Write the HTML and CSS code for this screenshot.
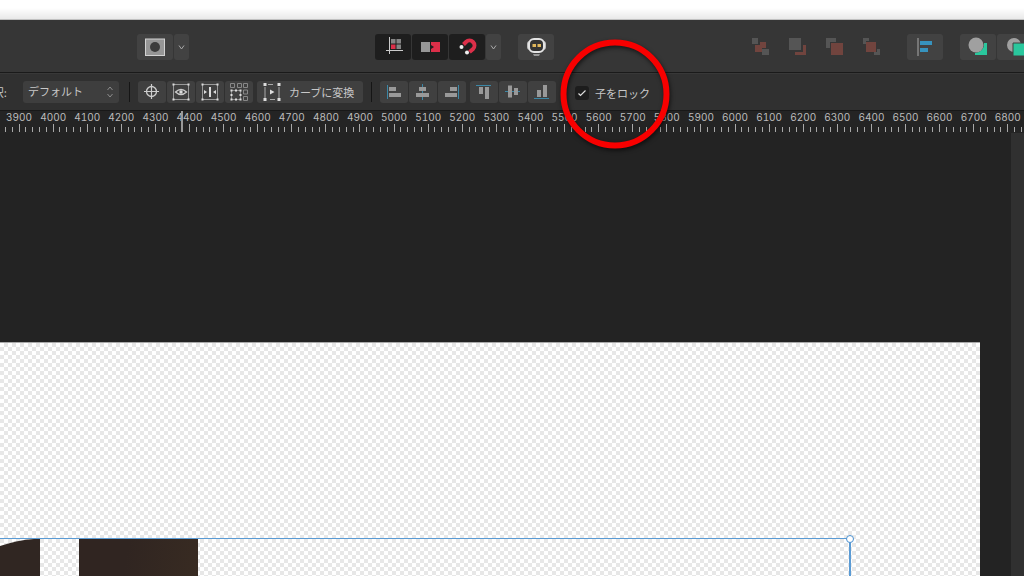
FILE: index.html
```html
<!DOCTYPE html>
<html lang="ja">
<head>
<meta charset="utf-8">
<meta name="viewport" content="width=device-width, initial-scale=1">
<title>子をロック</title>
<link rel="stylesheet" href="styles.css">
</head>
<body>
<div class="app">
  <header class="toolbar">
    <div class="group mask-group">
      <button class="btn" aria-label="マスク"><svg width="36" height="26" viewBox="0 0 36 26"><rect x="8.500" y="5" width="19" height="16.500" fill="#969696" stroke="#d2d2d2"/><circle cx="18" cy="13" r="5" fill="#3c3c3c"/></svg></button>
      <button class="btn btn-slim" aria-label="マスクのオプション"><svg width="15" height="26" viewBox="0 0 15 26"><path d="M5 11.500 7.500 15 10 11.500" fill="none" stroke="#aaa"/></svg></button>
    </div>
    <div class="group snap-group">
      <button class="btn btn-on" aria-label="ピクセル整合"><svg width="36" height="26" viewBox="0 0 36 26"><path d="M16 5h4.500v4.500H16zM21.500 5H26v4.500h-4.500zM21.500 10.500H26V15h-4.500z" fill="#858585"/><path d="M16 10.500h4.500V15H16z" fill="#dc2f49"/><path d="M14.500 3v17M11 16.500h17" stroke="#ccc" fill="none"/></svg></button>
      <button class="btn btn-on" aria-label="移動を整数に"><svg width="36" height="26" viewBox="0 0 36 26"><path d="M9 8h9v10H9z" fill="#969696"/><path d="M19 8h9v10h-9v-3l3-2-3-2z" fill="#dc2f49"/></svg></button>
      <button class="btn btn-on" aria-label="スナップ"><svg width="36" height="26" viewBox="0 0 36 26"><path d="m14.500 10.500 2.500-2.500a4.900 4.900 0 0 1 7 7l-3.500 3" fill="none" stroke="#dc2f49" stroke-width="4"/><circle cx="12.500" cy="13" r="2" fill="#eee"/><circle cx="18" cy="18.500" r="2" fill="#eee"/></svg></button>
      <button class="btn btn-slim" aria-label="スナップのオプション"><svg width="15" height="26" viewBox="0 0 15 26"><path d="M5 11.500 7.500 15 10 11.500" fill="none" stroke="#aaa"/></svg></button>
    </div>
    <div class="group assistant-group">
      <button class="btn" aria-label="アシスタント"><svg width="36" height="26" viewBox="0 0 36 26"><rect x="9" y="7" width="19" height="9" rx="3" fill="#bbb"/><rect x="11" y="5" width="15" height="13" rx="5" fill="#333" stroke="#e4e4e4" stroke-width="2"/><path d="M14.500 10H18v3h-3.500zM19.500 10H23v3h-3.500z" fill="#dfb65b"/><path d="M15 20h7l-1 2h-5z" fill="#999"/></svg></button>
    </div>
    <div class="group order-group">
      <button class="btn btn-flat" disabled aria-label="最背面へ移動"><svg width="36" height="26" viewBox="0 0 36 26"><path d="M14 11h5V8h6v6h-4v4h-7z" fill="#71443e"/><path d="M11 4h6v6h-6zM21 15h7v6h-7z" fill="#555"/></svg></button>
      <button class="btn btn-flat" disabled aria-label="背面へ移動"><svg width="36" height="26" viewBox="0 0 36 26"><path d="M11 4h12v12H11z" fill="#555"/><path d="M25 11h3v10H17v-3h8z" fill="#71443e"/></svg></button>
      <button class="btn btn-flat" disabled aria-label="前面へ移動"><svg width="36" height="26" viewBox="0 0 36 26"><path d="M11 4h10v4h-6v6h-4z" fill="#555"/><path d="M16 9h12v12H16z" fill="#71443e"/></svg></button>
      <button class="btn btn-flat" disabled aria-label="最前面へ移動"><svg width="36" height="26" viewBox="0 0 36 26"><path d="M11 4h6v3h-3v3h-3zM25 15h3v6h-6v-3h3z" fill="#555"/><path d="M14 8h10v10H14z" fill="#71443e"/></svg></button>
    </div>
    <div class="group align-group">
      <button class="btn" aria-label="整列"><svg width="36" height="26" viewBox="0 0 36 26"><path d="M11 4v18" stroke="#888" stroke-width="1.500"/><path d="M13 7h12v4H13zM13 14h8v4h-8z" fill="#3793be"/></svg></button>
    </div>
    <div class="group boolean-group">
      <button class="btn" aria-label="追加"><svg width="36" height="26" viewBox="0 0 36 26"><path d="M15 21h12V9h-3a9 9 0 0 1-9 10z" fill="#2ac79d"/><circle cx="16" cy="11" r="7.500" fill="#a0a0a0"/></svg></button>
      <button class="btn btn-edge" aria-label="型抜き"><svg width="27" height="26" viewBox="0 0 27 26"><circle cx="17" cy="11" r="7" fill="#a0a0a0"/><path d="M16 9h12v13H16z" fill="#2ac79d" stroke="#404040"/></svg></button>
    </div>
  </header>

  <div class="context">
    <label class="context-label" for="preset">択:</label>
    <div class="picker">
      <select id="preset"><option>デフォルト</option></select>
      <svg class="picker-arrows" width="8" height="14" viewBox="0 0 8 14"><path d="M1.500 5 4 2l2.500 3M1.500 9 4 12l2.500-3" fill="none" stroke="#8c8c8c"/></svg>
    </div>
    <i class="divider"></i>
    <div class="tools">
      <button class="tool" aria-label="回転中心"><svg width="28" height="22" viewBox="0 0 28 22"><circle cx="13.500" cy="10.500" r="5" fill="none" stroke="#ccc" stroke-width="1.300"/><path d="M13.500 3v15M6 10.500h15" stroke="#ccc" stroke-width="1.200"/></svg></button>
      <button class="tool" aria-label="選択を隠す"><svg width="28" height="22" viewBox="0 0 28 22"><path d="M6.500 3.500h15v15h-15z" fill="none" stroke="#999"/><path d="M5.500 2.500h2v2h-2zM20.500 2.500h2v2h-2zM5.500 17.500h2v2h-2zM20.500 17.500h2v2h-2z" fill="#ddd"/><path d="M8.500 11q5.500-5 11 0-5.500 5-11 0z" fill="none" stroke="#ccc" stroke-width="1.300"/><circle cx="14" cy="11" r="1.700" fill="#ddd"/></svg></button>
      <button class="tool" aria-label="変換の原点"><svg width="28" height="22" viewBox="0 0 28 22"><path d="M6.500 3.500h15v15h-15z" fill="none" stroke="#999"/><path d="M5.500 2.500h2v2h-2zM20.500 2.500h2v2h-2zM5.500 17.500h2v2h-2zM20.500 17.500h2v2h-2zM13 6h2v10h-2zM8 9l3 2-3 2zM20 9l-3 2 3 2z" fill="#ddd"/></svg></button>
      <button class="tool" aria-label="個別に変形"><svg width="28" height="22" viewBox="0 0 28 22"><path d="M5.500 2.500h4v4h-4zM12.500 2.500h4v4h-4zM18.500 2.500h4v4h-4zM18.500 9h4v4h-4zM18.500 15.500h4v4h-4z" fill="none" stroke="#888"/><path d="M6.500 9.500h9v9h-9z" fill="none" stroke="#888"/><path d="M5.500 8.500h2v2h-2zM14.500 8.500h2v2h-2zM5.500 17.500h2v2h-2zM14.500 17.500h2v2h-2zM10 8.500h2v2h-2zM10 17.500h2v2h-2zM5.500 13h2v2h-2zM14.500 13h2v2h-2z" fill="#ddd"/></svg></button>
    </div>
    <button class="tool convert"><svg width="28" height="22" viewBox="0 0 28 22"><path d="M7 6v11M21 6v11M10 3.500h5M12 18.500h5" fill="none" stroke="#aaa"/><path d="M5.500 2h3v3h-3zM19.500 2h3v3h-3zM5.500 17h3v3h-3zM19.500 17h3v3h-3zM12 8.500l4.500 2.500-4.500 2.500z" fill="#ddd"/></svg><span>カーブに変換</span></button>
    <i class="divider"></i>
    <div class="tools align-tools">
      <button class="tool" aria-label="左揃え"><svg width="28" height="22" viewBox="0 0 28 22"><path d="M9 6h7v4H9zM9 12h12v4H9z" fill="#999"/><path d="M7.500 4v14" stroke="#3b87a6"/></svg></button>
      <button class="tool" aria-label="左右中央揃え"><svg width="28" height="22" viewBox="0 0 28 22"><path d="M13.500 3v16" stroke="#3b87a6"/><path d="M10 6h7v4h-7zM7 12h13v4H7z" fill="#999"/></svg></button>
      <button class="tool" aria-label="右揃え"><svg width="28" height="22" viewBox="0 0 28 22"><path d="M12 6h7v4h-7zM7 12h12v4H7z" fill="#999"/><path d="M20.500 4v14" stroke="#3b87a6"/></svg></button>
    </div>
    <div class="tools">
      <button class="tool" aria-label="上揃え"><svg width="28" height="22" viewBox="0 0 28 22"><path d="M9 6h4v7H9zM15 6h4v12h-4z" fill="#999"/><path d="M6 4.500h15" stroke="#3b87a6"/></svg></button>
      <button class="tool" aria-label="上下中央揃え"><svg width="28" height="22" viewBox="0 0 28 22"><path d="M6 10.500h15" stroke="#3b87a6"/><path d="M9 4.500h4v12H9zM15 7h4v7h-4z" fill="#999"/></svg></button>
      <button class="tool" aria-label="下揃え"><svg width="28" height="22" viewBox="0 0 28 22"><path d="M9 9h4v7H9zM15 4h4v12h-4z" fill="#999"/><path d="M6 17.500h15" stroke="#3b87a6"/></svg></button>
    </div>
    <label class="lock"><input type="checkbox" checked><span>子をロック</span></label>
    <svg class="highlight" width="124" height="124" viewBox="0 0 124 124"><circle cx="62" cy="62" r="51.500" fill="none" stroke="#f80000" stroke-width="6"/></svg>
  </div>

  <div class="ruler" id="ruler"><i class="cursor"></i></div>

  <main class="workspace">
    <div class="canvas">
      <div class="artboard">
        <div class="selection">
          <svg class="shape-curve" width="40" height="38" viewBox="0 0 40 38"><path d="M0 7Q18 1 34 0h6v38H0z" fill="#302622"/></svg>
          <div class="shape-block"></div>
          <i class="handle"></i>
        </div>
      </div>
    </div>
    <div class="scrollbar"></div>
  </main>
</div>
<script src="ruler.js"></script>
</body>
</html>
```
FILE: ruler.js
```js
const ruler = document.getElementById('ruler');
for (let value = 3900; value <= 6800; value += 100) {
  const cell = document.createElement('div');
  cell.className = 'mark';
  const label = document.createElement('span');
  label.textContent = value;
  const ticks = document.createElement('div');
  ticks.className = 'ticks';
  for (let i = 0; i < 5; i++) {
    ticks.appendChild(document.createElement('i'));
  }
  cell.append(label, ticks);
  ruler.appendChild(cell);
}
```
FILE: styles.css
```css
* { box-sizing: border-box; }
body {
  margin: 0;
  background: #232323;
  color: #c8c8c8;
  font-family: Inter, "Noto Sans CJK JP", sans-serif;
  font-size: 11px;
}
.app {
  display: flex;
  flex-direction: column;
  height: 100vh;
  padding-top: 20px;
  overflow: hidden;
  background: linear-gradient(#fff 0, #fff 8px, #e9e9e9 19px, #999 20px);
  background-size: 100% 20px;
  background-repeat: no-repeat;
}
button { padding: 0; border: 0; color: inherit; font: inherit; }
svg { display: block; flex: none; }
.toolbar {
  display: flex;
  flex: none;
  align-items: center;
  height: 53px;
  padding: 2px 0 0 137px;
  background: #363636;
  border-bottom: 1px solid #1a1a1a;
}
.group { display: flex; flex: none; gap: 1px; }
.btn {
  width: 36px;
  height: 26px;
  overflow: hidden;
  border-radius: 3px;
  background: #424242;
}
.btn-slim { width: 15px; }
.btn-on { background: #1e1e1e; }
.btn-flat { background: none; }
.btn-edge { width: 27px; border-radius: 3px 0 0 3px; }
.snap-group { margin-left: 186px; }
.assistant-group { margin-left: 17px; }
.order-group { margin-left: auto; }
.align-group { margin-left: 19px; }
.boolean-group { margin-left: 17px; }

.context {
  position: relative;
  z-index: 1;
  display: flex;
  flex: none;
  align-items: center;
  height: 38px;
  padding-bottom: 1px;
  background: #303030;
  border-top: 1px solid #383838;
  border-bottom: 1px solid #181818;
}
.context-label {
  display: flex;
  flex: none;
  justify-content: flex-end;
  width: 7px;
  margin-right: 16px;
  white-space: nowrap;
}
.picker { position: relative; width: 96px; flex: none; }
.picker select {
  display: block;
  width: 100%;
  height: 22px;
  padding: 0 5px;
  border: 0;
  border-radius: 3px;
  appearance: none;
  background: #3e3e3e;
  color: inherit;
  font: inherit;
}
.picker-arrows { position: absolute; top: 4px; right: 5px; pointer-events: none; }
.divider { flex: none; width: 1px; height: 20px; margin: 0 8px 0 10px; background: #151515; }
.tools { display: flex; flex: none; gap: 1px; }
.tool {
  display: flex;
  align-items: center;
  flex: none;
  height: 22px;
  border-radius: 3px;
  background: #404040;
}
.convert { width: 106px; gap: 3px; margin-left: 4px; padding-left: 1px; }
.convert span { white-space: nowrap; }
.convert + .divider { margin-left: 8px; }
.align-tools { margin-right: 4px; }
.lock { display: flex; align-items: center; gap: 6px; margin-left: 19px; padding-top: 2px; white-space: nowrap; }
.lock input {
  width: 14px;
  height: 14px;
  margin: 0;
  border-radius: 3px;
  appearance: none;
  background: #1d1d1d url("data:image/svg+xml,%3Csvg xmlns='http://www.w3.org/2000/svg' viewBox='0 0 14 14'%3E%3Cpath d='M3.500 7.500 5.500 9.500l5-5' fill='none' stroke='%23ddd' stroke-width='1.200'/%3E%3C/svg%3E");
}
.highlight {
  position: absolute;
  top: -42px;
  left: 553px;
  pointer-events: none;
  filter: drop-shadow(1px 2px 2px rgba(0, 0, 0, .6));
}

.ruler {
  position: relative;
  display: flex;
  flex: none;
  height: 22px;
  padding-left: 2px;
  margin-right: -1px;
  background: #242424;
  color: #bdbdbd;
  font-size: 10px;
  font-variant-numeric: tabular-nums;
  line-height: 12px;
}
.mark { flex: 1; min-width: 0; text-align: center; }
.ticks { display: flex; align-items: flex-end; height: 9px; }
.ticks i { flex: 1; height: 5px; background: linear-gradient(#a8a8a8, #a8a8a8) center / 1px 100% no-repeat; }
.ticks i:nth-child(3) { height: 8px; }
.cursor { position: absolute; left: 181px; top: 0; width: 2px; height: 21px; background: #999; }

.workspace { display: flex; flex: 1; min-height: 0; }
.canvas { display: flex; flex: 1; padding: 209px 31px 0 0; }
.scrollbar { width: 13px; background: #303030; }
.artboard {
  flex: 1;
  padding-top: 195px;
  border-top: 1px solid #aaa;
  background: repeating-conic-gradient(#e7e7e7 0 25%, #fff 0 50%) 0 0 / 8px 8px;
}
.selection {
  position: relative;
  display: flex;
  gap: 39px;
  height: 100%;
  margin-right: 129px;
  border-top: 1px solid #5a9bd5;
  border-right: 2px solid #5a9bd5;
}
.shape-block { width: 119px; background: linear-gradient(100deg, #302521 40%, #382b22); }
.handle {
  position: absolute;
  top: -4px;
  right: -5px;
  width: 8px;
  height: 8px;
  border: 1px solid #4a90d0;
  border-radius: 50%;
  background: #fff;
}
```
